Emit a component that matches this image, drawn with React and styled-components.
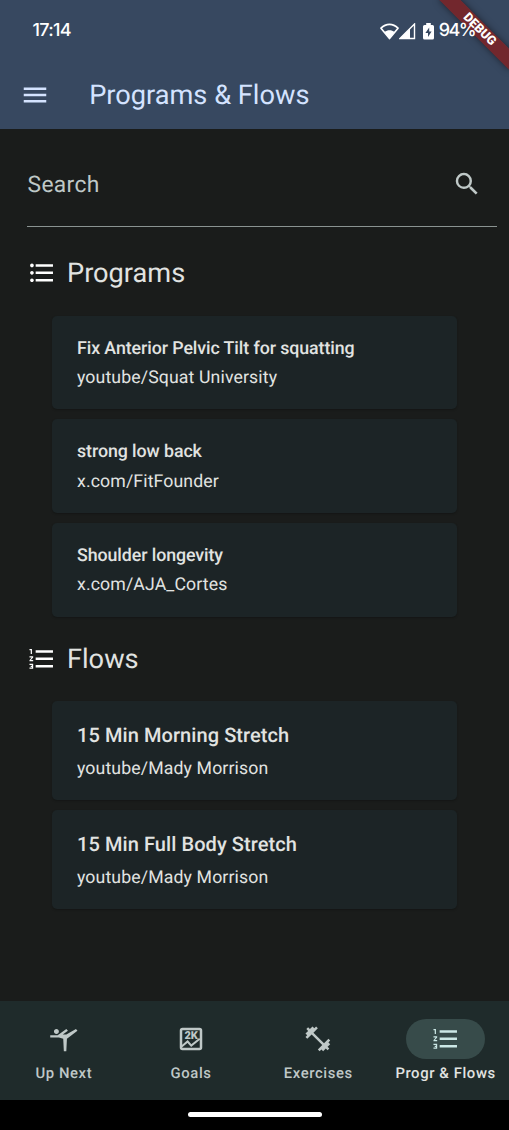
import React from "react";
import styled, { createGlobalStyle } from "styled-components";
import {
  MdMenu,
  MdSearch,
  MdFormatListBulleted,
  MdFormatListNumbered,
  MdSportsGymnastics,
  MdFitnessCenter,
} from "react-icons/md";

const GlobalStyle = createGlobalStyle`
  * { box-sizing: border-box; }
  body { margin: 0; background: #1a1c1b; }
`;

const Screen = styled.div`
  position: relative;
  width: 509px;
  height: 1130px;
  display: flex;
  flex-direction: column;
  overflow: hidden;
  background: #1a1c1b;
  color: #e1e3e1;
  font-family: Roboto, "Liberation Sans", sans-serif;
  text-rendering: geometricPrecision;
  white-space: nowrap;
`;

const Header = styled.header`
  height: 129px;
  flex: none;
  background: #374860;
  color: #d4e3ff;
`;

const StatusBar = styled.div`
  position: relative;
  z-index: 2;
  height: 60px;
  padding: 2px 34px 0 32.5px;
  display: flex;
  align-items: center;
  justify-content: space-between;
  color: #fff;
  font: 500 18px/20px Inter, Roboto, sans-serif;
  letter-spacing: -0.7px;
`;

const StatusIcons = styled.div`
  display: flex;
  align-items: center;
  svg { display: block; }
`;

const BatteryLevel = styled.span`
  margin-left: 5px;
  letter-spacing: -1.6px;
`;

const TitleBar = styled.div`
  height: 69px;
  padding-left: 19.5px;
  display: flex;
  align-items: center;
`;

const Title = styled.h1`
  margin: 0 0 0 39.7px;
  font-size: 27.2px;
  line-height: 34px;
  font-weight: 400;
`;

const Content = styled.main`
  flex: 1;
  padding-top: 12px;
`;

const SearchField = styled.div`
  height: 86px;
  margin: 0 12px 0 27px;
  padding: 0 15px 0 0.5px;
  display: flex;
  align-items: center;
  justify-content: space-between;
  border-bottom: 1px solid #8a9391;
  color: #bfc8c7;
  font-size: 22.8px;
  letter-spacing: 0.35px;
`;

const SearchLabel = styled.span`
  padding-top: 1.5px;
`;

const SectionTitle = styled.h2`
  height: 32px;
  margin: ${(p) => p.$top}px 0 0;
  padding-left: 27.3px;
  display: flex;
  align-items: center;
  gap: 10px;
  font-size: 27.2px;
  font-weight: 400;
  svg { color: #fff; }
`;

const CardList = styled.div`
  margin: 26.5px 52px 0;
  display: flex;
  flex-direction: column;
  gap: ${(p) => p.$gap}px;
`;

const Card = styled.article`
  height: ${(p) => (p.$large ? 98.7 : 93.7)}px;
  padding: ${(p) => (p.$large ? "19px 25px 0" : "19px 25px 0")};
  border-radius: 5px;
  background: #1c2426;
  box-shadow: 0 1px 2px rgba(0, 0, 0, 0.25);
`;

const CardTitle = styled.div`
  font-size: ${(p) => (p.$large ? 20 : 17.8)}px;
  line-height: ${(p) => (p.$large ? 30 : 28)}px;
  font-weight: 500;
  letter-spacing: ${(p) => (p.$large ? 0.08 : -0.08)}px;
`;

const CardSource = styled.div`
  margin-top: ${(p) => (p.$large ? 5.6 : 2.6)}px;
  font-size: 17.7px;
  line-height: 26px;
  letter-spacing: 0.12px;
`;

const NavBar = styled.nav`
  height: 99px;
  flex: none;
  display: grid;
  grid-template-columns: repeat(4, 1fr);
  background: #1f2b2b;
`;

const NavItem = styled.div`
  padding-top: 18px;
  display: flex;
  flex-direction: column;
  align-items: center;
  color: ${(p) => (p.$active ? "#e1e3e1" : "#bfc8c7")};
  font-size: 14.85px;
  line-height: 20px;
  font-weight: 500;
  letter-spacing: 0.6px;
`;

const NavLabel = styled.span`
  padding-left: 0.4px;
`;

const Indicator = styled.span`
  width: 79px;
  height: 40px;
  margin-bottom: 4px;
  display: flex;
  align-items: center;
  justify-content: center;
  border-radius: 20px;
  background: ${(p) => (p.$active ? "#374b4a" : "transparent")};
  color: ${(p) => (p.$active ? "#cce8e6" : "#bfc8c7")};
`;

const GestureArea = styled.div`
  height: 30px;
  flex: none;
  padding-top: 12.4px;
  background: #000;
`;

const GestureHandle = styled.div`
  width: 134px;
  height: 5px;
  margin: 0 auto;
  border-radius: 3px;
  background: #fff;
`;

const DebugBanner = styled.div`
  position: absolute;
  z-index: 1;
  left: 429.8px;
  top: 22.3px;
  width: 99px;
  height: 14.85px;
  transform: rotate(45deg);
  background: rgba(125, 34, 36, 0.85);
  box-shadow: 0 0 7px rgba(0, 0, 0, 0.5);
  color: #fff;
  font-size: 12.6px;
  line-height: 15px;
  font-weight: 900;
  text-align: center;
`;

const WifiIcon = () => (
  <svg width="19" height="17" viewBox="0 0 19 17">
    <path d="M1 5.2C6 .2 13 .2 18 5.2L9.5 15.5Z" fill="none" stroke="#fff" strokeWidth="1.7" strokeLinejoin="round" />
    <path d="M4.5 9C7.5 6.5 11.5 6.5 14.5 9L9.5 15.5Z" fill="#fff" />
  </svg>
);

const SignalIcon = () => (
  <svg width="17" height="17" viewBox="0 0 17 17">
    <path d="M1 15.5L15.5 1V15.5Z" fill="none" stroke="#fff" strokeWidth="1.4" />
    <path d="M1 15.5L11 5.5V15.5Z" fill="#fff" />
  </svg>
);

const BatteryIcon = () => (
  <svg width="11" height="17" viewBox="0 0 11 17" style={{ marginLeft: 7 }}>
    <path d="M3.2 0H7.8V2H9.5Q11 2 11 3.5V15Q11 16.5 9.5 16.5H1.5Q0 16.5 0 15V3.5Q0 2 1.5 2H3.2Z" fill="#fff" />
    <path d="M6.2 4.5L2.4 10H5V14L8.6 8.5H6.2Z" fill="#374860" />
  </svg>
);

const GoalsIcon = () => (
  <svg width="30" height="30" viewBox="0 0 24 24">
    <rect x="4" y="4" width="16" height="16" rx="1.2" fill="none" stroke="currentColor" strokeWidth="2" />
    <path d="M4.5 18L9.3 14L12.2 17.3L19 11.8" fill="none" stroke="currentColor" strokeWidth="1.6" />
    <text x="12.1" y="12.4" textAnchor="middle" fill="currentColor" fontFamily="Roboto, sans-serif" fontSize="8.8" fontWeight="900" letterSpacing="0">2K</text>
  </svg>
);

const programs = [
  ["Fix Anterior Pelvic Tilt for squatting", "youtube/Squat University"],
  ["strong low back", "x.com/FitFounder"],
  ["Shoulder longevity", "x.com/AJA_Cortes"],
];

const flows = [
  ["15 Min Morning Stretch", "youtube/Mady Morrison"],
  ["15 Min Full Body Stretch", "youtube/Mady Morrison"],
];

const tabs = [
  ["Up Next", MdSportsGymnastics],
  ["Goals", GoalsIcon],
  ["Exercises", MdFitnessCenter],
  ["Progr & Flows", MdFormatListNumbered],
];

const Cards = ({ items, large, gap }) => (
  <CardList $gap={gap}>
    {items.map(([title, source]) => (
      <Card key={title} $large={large}>
        <CardTitle $large={large}>{title}</CardTitle>
        <CardSource $large={large}>{source}</CardSource>
      </Card>
    ))}
  </CardList>
);

export default function App() {
  return (
    <Screen>
      <GlobalStyle />
      <Header>
        <StatusBar>
          <span>17:14</span>
          <StatusIcons>
            <WifiIcon />
            <SignalIcon />
            <BatteryIcon />
            <BatteryLevel>94%</BatteryLevel>
          </StatusIcons>
        </StatusBar>
        <TitleBar>
          <MdMenu size={30} />
          <Title>Programs &amp; Flows</Title>
        </TitleBar>
      </Header>
      <Content>
        <SearchField>
          <SearchLabel>Search</SearchLabel>
          <MdSearch size={30} />
        </SearchField>
        <SectionTitle $top={30}>
          <MdFormatListBulleted size={29.7} />
          Programs
        </SectionTitle>
        <Cards items={programs} gap={10} />
        <SectionTitle $top={26.4}>
          <MdFormatListNumbered size={29.7} />
          Flows
        </SectionTitle>
        <Cards items={flows} large gap={10} />
      </Content>
      <NavBar>
        {tabs.map(([label, Icon], i) => (
          <NavItem key={label} $active={i === 3}>
            <Indicator $active={i === 3}>
              <Icon size={29.7} />
            </Indicator>
            <NavLabel>{label}</NavLabel>
          </NavItem>
        ))}
      </NavBar>
      <GestureArea>
        <GestureHandle />
      </GestureArea>
      <DebugBanner>DEBUG</DebugBanner>
    </Screen>
  );
}
